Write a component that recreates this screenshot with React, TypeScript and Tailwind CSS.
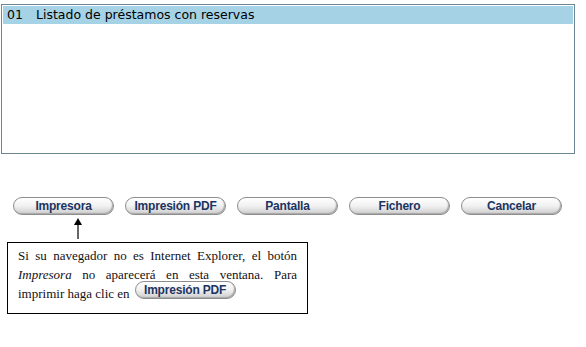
import React from "react";

const btnFont = {
  fontFamily: '"Liberation Sans", Arial, sans-serif',
};

function PillButton({ label, className = "" }: { label: string; className?: string }) {
  return (
    <div
      className={
        "flex h-[18px] w-[101px] items-center justify-center rounded-full border border-[#8e8e8e] bg-gradient-to-b from-white via-[#f1f1f1] to-[#cdcdcd] shadow-[inset_-1px_-1px_1px_#a8a8a8] text-[12px] font-bold leading-none tracking-[-0.2px] text-[#1c3461] " +
        className
      }
      style={btnFont}
    >
      {label}
    </div>
  );
}

export default function App() {
  const buttons = ["Impresora", "Impresión PDF", "Pantalla", "Fichero", "Cancelar"];
  return (
    <div className="h-[347px] w-[586px] bg-white pl-[1px] pt-[4px]">
      <div className="h-[150px] w-[574px] border border-[#6c8696] p-[1px]">
        <div
          className="flex h-[18px] items-center bg-[#a6d2e5] pl-[4px] text-[12.5px] text-black"
          style={{ fontFamily: '"DejaVu Sans", sans-serif' }}
        >
          <span className="w-[29px]">01</span>
          <span>Listado de préstamos con reservas</span>
        </div>
      </div>

      <div className="ml-[12px] mt-[43px] flex gap-[11px]">
        {buttons.map((b) => (
          <PillButton key={b} label={b} />
        ))}
      </div>

      <div className="ml-[70px] mt-[2px] h-[23px] w-[14px]">
        <svg width="14" height="23" viewBox="0 0 14 23">
          <polygon points="7,1 3,8 11,8" fill="#000" />
          <line x1="7" y1="7" x2="7" y2="22" stroke="#000" strokeWidth="1.2" />
        </svg>
      </div>

      <div
        className="ml-[6px] mt-[2px] h-[72px] w-[301px] border border-black px-[10px] pt-[3px] text-[13px] leading-[19px] text-[#141014]"
        style={{ fontFamily: '"Liberation Serif", "Times New Roman", serif' }}
      >
        <div className="text-justify [text-align-last:justify]">
          Si su navegador no es Internet Explorer, el botón
        </div>
        <div className="text-justify [text-align-last:justify]">
          <i>Impresora</i> no aparecerá en esta ventana. Para
        </div>
        <div className="mt-[-3px] flex items-end gap-[5px]">
          <span className="mb-[-3px] leading-[16px]">imprimir haga clic en</span>
          <PillButton label="Impresión PDF" />
        </div>
      </div>
    </div>
  );
}
